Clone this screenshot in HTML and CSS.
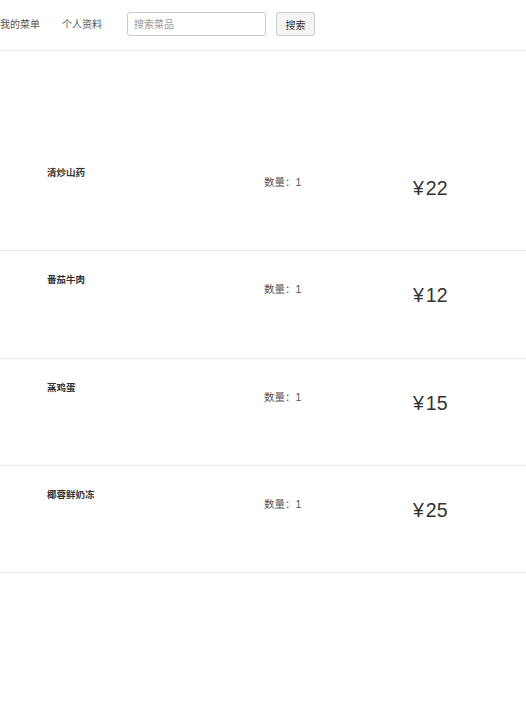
FILE: index.html
```html
<!DOCTYPE html>
<html lang="zh">
<head>
<meta charset="utf-8">
<title>我的菜单</title>
<link rel="stylesheet" href="styles.css">
</head>
<body>
<nav class="nav">
  <a class="nav-link">我的菜单</a>
  <a class="nav-link nav-link-2">个人资料</a>
  <form class="search">
    <input class="search-input" type="text" placeholder="搜索菜品">
    <button class="search-btn" type="button">搜索</button>
  </form>
</nav>
<main class="list">
  <div class="row">
    <div class="col-name">清炒山药</div>
    <div class="col-qty">数量：1</div>
    <div class="col-price"><span class="yen">¥</span>22</div>
  </div>
  <div class="row">
    <div class="col-name">番茄牛肉</div>
    <div class="col-qty">数量：1</div>
    <div class="col-price"><span class="yen">¥</span>12</div>
  </div>
  <div class="row">
    <div class="col-name">蒸鸡蛋</div>
    <div class="col-qty">数量：1</div>
    <div class="col-price"><span class="yen">¥</span>15</div>
  </div>
  <div class="row">
    <div class="col-name">椰蓉鲜奶冻</div>
    <div class="col-qty">数量：1</div>
    <div class="col-price"><span class="yen">¥</span>25</div>
  </div>
</main>
</body>
</html>
```
FILE: styles.css
```css
html, body {
  margin: 0;
  padding: 0;
  background: #fff;
}
body {
  font-family: "Liberation Sans", "Noto Sans CJK SC", sans-serif;
  color: #333;
}
.nav {
  height: 50px;
  border-bottom: 1px solid #ebebeb;
  display: flex;
  align-items: center;
  box-sizing: content-box;
}
.nav-link {
  font-size: 10px;
  line-height: 14px;
  color: #555;
}
.nav-link-2 {
  margin-left: 22px;
}
.search {
  display: flex;
  align-items: center;
  margin: 0 0 2px 25px;
}
.search-input {
  box-sizing: border-box;
  width: 139px;
  height: 24px;
  border: 1px solid #ccc;
  border-radius: 3px;
  padding: 0 6px;
  font-family: inherit;
  font-size: 10px;
  color: #555;
  outline: none;
}
.search-input::placeholder {
  color: #999;
}
.search-btn {
  box-sizing: border-box;
  width: 39px;
  height: 24px;
  margin-left: 10px;
  border: 1px solid #ccc;
  border-radius: 3px;
  background: #f4f4f4;
  font-family: inherit;
  font-size: 10px;
  color: #333;
  padding: 0;
}
.list {
  padding-top: 93px;
}
.row {
  height: 106.33px;
  border-bottom: 1px solid #e8e8e8;
  display: flex;
  align-items: flex-start;
  padding-left: 47px;
}
.col-name {
  width: 217px;
  font-size: 9.5px;
  line-height: 12px;
  font-weight: bold;
  color: #333;
  margin-top: 23px;
}
.col-qty {
  width: 149px;
  font-size: 10.5px;
  line-height: 13px;
  color: #555;
  margin-top: 32px;
}
.col-price {
  font-size: 19.5px;
  line-height: 22px;
  color: #333;
  margin-top: 33px;
}
.yen {
  margin-right: 2px;
}
```
